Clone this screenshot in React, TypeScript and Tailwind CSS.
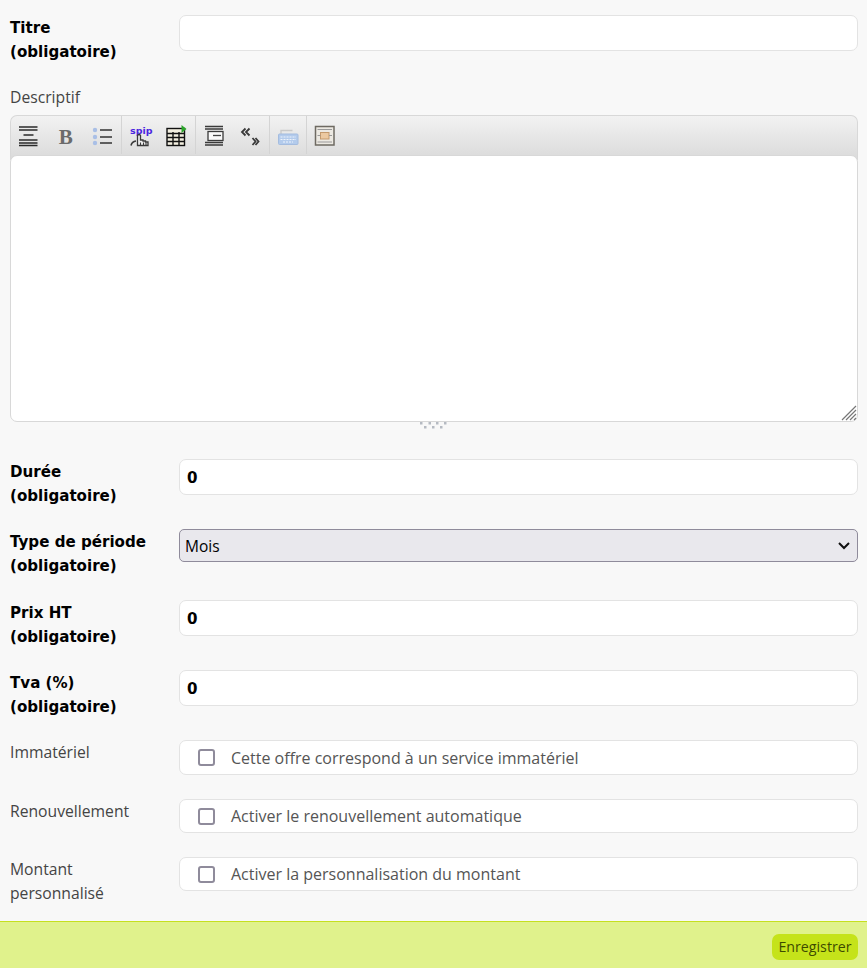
import type { ReactNode } from "react"

const boldFont = "font-['DejaVu_Sans',sans-serif] font-bold text-[15.1px] leading-[24px] text-black"
const plainFont = "font-['Open_Sans',sans-serif] text-[15.7px] leading-[24px] text-[#444]"
const inputBox = "flex-1 h-[36px] rounded-[7px] border border-[#e3e3e3] bg-white"

function RequiredLabel({ children }: { children: ReactNode }) {
  return <div className={`w-[169px] h-[48px] shrink-0 pt-px ${boldFont}`}>{children}<br />(obligatoire)</div>
}

function NumberRow({ label, className }: { label: string; className: string }) {
  return (
    <div className={`flex ${className}`}>
      <RequiredLabel>{label}</RequiredLabel>
      <div className={`${inputBox} flex items-center pt-px pl-[7px] ${boldFont}`}>0</div>
    </div>
  )
}

function CheckRow({ label, text, className, height }: { label: ReactNode; text: string; className: string; height: string }) {
  return (
    <div className={`flex ${className}`}>
      <div className={`w-[169px] shrink-0 ${plainFont}`}>{label}</div>
      <div className={`flex-1 ${height} rounded-[7px] border border-[#e3e3e3] bg-white flex items-center pl-[18px]`}>
        <span className="w-[17px] h-[17px] rounded-[3px] border-2 border-[#8f8b9b] bg-white" />
        <span className="ml-[16px] font-['Open_Sans',sans-serif] text-[16px] leading-[24px] text-[#555]">{text}</span>
      </div>
    </div>
  )
}

const Divider = () => <span className="w-px h-[38px] bg-[#d4d4d4]" />

function Btn({ children }: { children: ReactNode }) {
  return <span className="w-[36.5px] h-[38px] flex items-center justify-center">{children}</span>
}

function Icon({ children }: { children: ReactNode }) {
  return <svg className="overflow-visible" width="22" height="22" viewBox="0 0 22 22">{children}</svg>
}

function Toolbar() {
  return (
    <div className="h-[45px] rounded-t-[7px] border border-[#d8d8d8] border-b-0 bg-gradient-to-b from-[#f2f2f2] to-[#dadada] flex items-start">
      <Btn>
        <Icon>
          <path d="M1 3h18.500M1 6h18.500M5.500 11h10M1 16h18.500M1 19h18.500M1 21.500h18.500" stroke="#2a2a2a" strokeWidth="1.500" fill="none" />
        </Icon>
      </Btn>
      <Btn>
        <span className="font-['Liberation_Serif',serif] font-bold text-[21px] leading-[22px] pt-[3px] text-[#6b6b6b]">B</span>
      </Btn>
      <Btn>
        <Icon>
          <circle cx="4" cy="6" r="2.200" fill="#a9bfe6" />
          <circle cx="4" cy="13" r="2.200" fill="#a9bfe6" />
          <circle cx="4" cy="19" r="2.200" fill="#a9bfe6" />
          <path d="M9 6h12M9 13h12M9 19h12" stroke="#333" strokeWidth="1.300" />
        </Icon>
      </Btn>
      <Divider />
      <Btn>
        <Icon>
          <text x="1" y="10" fontFamily="DejaVu Sans, sans-serif" fontWeight="bold" fontSize="9.500" fill="#4a25e0">spip</text>
          <path d="M8.500 21.500v-10q1.500-2 3 0v4.500h2.500v1h2.500v1h2.500v3.500z" fill="#f0f0f0" stroke="#3a3a3a" strokeWidth="1.300" />
          <path d="M2 21.500q1-4 5-4.500" fill="none" stroke="#3a3a3a" strokeWidth="1.600" />
          <path d="M11.500 18.500v3M14.500 18.500v3M17 18.500v3" stroke="#3a3a3a" strokeWidth="1.100" />
        </Icon>
      </Btn>
      <Btn>
        <Icon>
          <rect x="2" y="4.500" width="17.500" height="17" fill="#f3efe0" stroke="#111" strokeWidth="1.400" />
          <path d="M2 9.500h17.500M2 13.500h17.500M2 17.500h17.500M8 8v13.500M14 8v13.500" stroke="#111" strokeWidth="1.400" />
          <path d="M16.500 1l5 4-5 4z" fill="#2aa52a" />
        </Icon>
      </Btn>
      <Divider />
      <Btn>
        <Icon>
          <path d="M2 2.500h18M2 5h18M2 18.500h18M2 21h18" stroke="#3a3a3a" strokeWidth="1.300" />
          <rect x="5" y="7.500" width="15" height="9" fill="#fafafa" stroke="#3a3a3a" strokeWidth="1.300" />
          <path d="M10 11.500h8" stroke="#444" strokeWidth="1.300" />
        </Icon>
      </Btn>
      <Btn>
        <Icon>
          <path d="M6.500 4.500l-3.500 3.500 3.500 3.500M10.500 4.500l-3.500 3.500 3.500 3.500M13.500 14l3 3.500-3 3.500M16.500 14l3 3.500-3 3.500" stroke="#3a3a3a" strokeWidth="1.800" fill="none" />
        </Icon>
      </Btn>
      <Divider />
      <Btn>
        <Icon>
          <path d="M4 10V6.500h11.500" stroke="#c9c9c9" strokeWidth="1.400" fill="none" />
          <rect x="1.500" y="10" width="19.500" height="10.500" rx="1" fill="#b3cbec" stroke="#a4bcdf" />
          <path d="M3.500 13h15.500M3.500 15.500h15.500M6 18h10" stroke="#eef3fb" strokeWidth="1.200" strokeDasharray="2 1" />
        </Icon>
      </Btn>
      <Divider />
      <Btn>
        <Icon>
          <rect x="1.500" y="2.500" width="18.500" height="18.500" fill="#ece9e2" stroke="#6e6a62" strokeWidth="1.500" />
          <path d="M3.500 5.500h14.500M3.500 18h14.500" stroke="#999" strokeWidth="1.200" />
          <rect x="6.500" y="8.500" width="8.500" height="6.500" fill="#ecc9a0" stroke="#c49a6c" />
          <path d="M3.500 11.500h3M15 11.500h3" stroke="#999" />
        </Icon>
      </Btn>
    </div>
  )
}

export default function App() {
  return (
    <div className="min-h-[968px] bg-[#f8f8f8] flex flex-col">
      <div className="pt-[15px] pl-[10px] pr-[9px]">
        <div className="flex mb-[22px]">
          <RequiredLabel>Titre</RequiredLabel>
          <div className={inputBox} />
        </div>

        <div className={`${plainFont} mb-[6px]`}>Descriptif</div>
        <Toolbar />
        <div className="relative -mt-[5px] h-[267px] rounded-[7px] border border-[#d8d8d8] bg-white">
          <svg className="absolute right-0 bottom-0" width="16" height="16" viewBox="0 0 16 16">
            <path d="M1 15L15 1M5 15L15 5M9 15l6-6M13 15l2-2" stroke="#777" strokeWidth="1.200" />
          </svg>
        </div>
        <div className="flex justify-center h-[37px] pr-[2px]">
          <svg width="28" height="7" viewBox="0 0 28 7">
            <path d="M1 0h2.500v2.500H1zM9.500 0H12v2.500H9.500zM17 0h2.500v2.500H17zM25 0h2.500v2.500H25zM5 4h2.500v2.500H5zM13 4h2.500v2.500H13zM21 4h2.500v2.500H21z" fill="#b5bac2" />
          </svg>
        </div>

        <NumberRow label="Durée" className="mb-[22px]" />

        <div className="flex mb-[23px]">
          <RequiredLabel>Type de période</RequiredLabel>
          <div className="flex-1 h-[33px] rounded-[5px] border border-[#8f8b9b] bg-[#e9e8ed] flex items-center justify-between pl-[5px] pr-[7px]">
            <span className="font-['Open_Sans',sans-serif] text-[15.5px] leading-[24px] text-black">Mois</span>
            <svg width="12" height="8" viewBox="0 0 12 8">
              <path d="M1 1l5 5 5-5" stroke="#111" strokeWidth="2" fill="none" />
            </svg>
          </div>
        </div>

        <NumberRow label="Prix HT" className="mb-[22px]" />
        <NumberRow label="Tva (%)" className="mb-[22px]" />

        <CheckRow label="Immatériel" text="Cette offre correspond à un service immatériel" className="mb-[24px]" height="h-[35px]" />
        <CheckRow label="Renouvellement" text="Activer le renouvellement automatique" className="mb-[24px]" height="h-[34px]" />
        <CheckRow label={<>Montant<br />personnalisé</>} text="Activer la personnalisation du montant" className="mb-[16px]" height="h-[34px]" />
      </div>

      <div className="h-[47px] border-t border-[#c5e01f] bg-[#e0f28c] flex items-start justify-end pt-[12px] pr-[9px]">
        <button className="w-[86px] h-[26px] rounded-[7px] bg-[#c5e31a] font-['Open_Sans',sans-serif] text-[14.2px] text-[#3d4a00]">
          Enregistrer
        </button>
      </div>
    </div>
  )
}
